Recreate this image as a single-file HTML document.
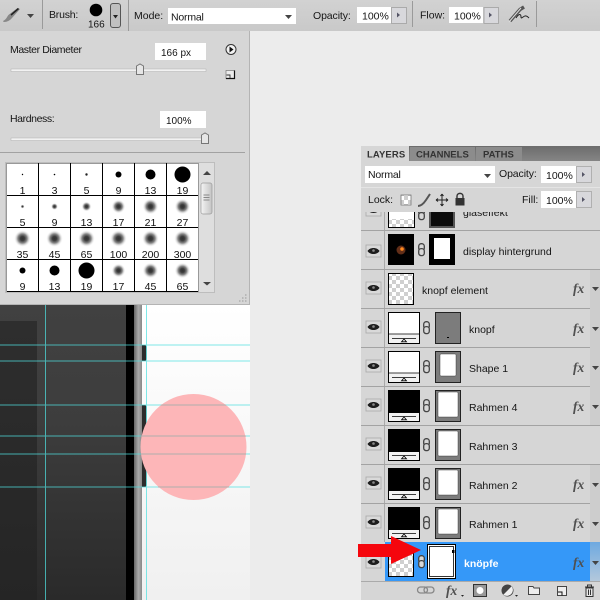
<!DOCTYPE html>
<html><head><meta charset="utf-8"><style>
html,body{margin:0;padding:0;background:#ececec;width:600px;height:600px;overflow:hidden}
svg{display:block}
text{font-family:"Liberation Sans",sans-serif;font-size:10.5px;fill:#151515}
.m{text-anchor:middle;font-size:10.5px;fill:#111}
.t{font-size:10.5px;font-weight:bold}
</style></head><body>
<svg width="600" height="600" viewBox="0 0 600 600" xmlns="http://www.w3.org/2000/svg">
<defs>
<linearGradient id="tb" x1="0" y1="0" x2="0" y2="1"><stop offset="0" stop-color="#d2d2d2"/><stop offset="1" stop-color="#c9c9c9"/></linearGradient>
<linearGradient id="dk" x1="0" y1="0" x2="0" y2="1"><stop offset="0" stop-color="#414141"/><stop offset=".4" stop-color="#3d3d3d"/><stop offset="1" stop-color="#2a2a2a"/></linearGradient>
<linearGradient id="dk2" x1="0" y1="0" x2="0" y2="1"><stop offset="0" stop-color="#2e2e2e"/><stop offset="1" stop-color="#252525"/></linearGradient>
<linearGradient id="br" x1="0" y1="0" x2="1" y2="0"><stop offset="0" stop-color="#666"/><stop offset=".55" stop-color="#aaa"/><stop offset="1" stop-color="#888"/></linearGradient>
<linearGradient id="wh" x1="0" y1="0" x2="0" y2="1"><stop offset="0" stop-color="#fff"/><stop offset="1" stop-color="#f0f0f0"/></linearGradient>
<linearGradient id="tabs" x1="0" y1="0" x2="0" y2="1"><stop offset="0" stop-color="#6c6c6c"/><stop offset="1" stop-color="#858585"/></linearGradient>
<linearGradient id="sel" x1="0" y1="0" x2="0" y2="1"><stop offset="0" stop-color="#6ea9e0"/><stop offset="1" stop-color="#b3c8dc"/></linearGradient>
<linearGradient id="sb" x1="0" y1="0" x2="1" y2="0"><stop offset="0" stop-color="#f4f4f4"/><stop offset="1" stop-color="#c4c4c4"/></linearGradient>
<radialGradient id="soft"><stop offset="0" stop-color="#303030"/><stop offset=".25" stop-color="#3c3c3c"/><stop offset=".55" stop-color="#8a8a8a"/><stop offset="1" stop-color="#fff" stop-opacity="0"/></radialGradient>
<pattern id="ck" width="8" height="8" patternUnits="userSpaceOnUse"><rect width="8" height="8" fill="#fff"/><rect width="4" height="4" fill="#cfcfcf"/><rect x="4" y="4" width="4" height="4" fill="#cfcfcf"/></pattern>
<clipPath id="cl"><rect x="361" y="212" width="239" height="18"/></clipPath>
<g id="eye"><rect x="0" y="0" width="15" height="12" fill="#d9d9d9" stroke="#a8a8a8" stroke-width=".8"/><path d="M1.500 6C4 2 11 2 13.500 6C11 10 4 10 1.500 6Z" fill="#1e1e1e"/><circle cx="7.500" cy="5.500" r="1.300" fill="#8a8a8a"/></g>
<g id="chain"><rect x="0.700" y="0.700" width="5.600" height="7" rx="2.500" fill="#d8d8d8" stroke="#444" stroke-width="1.300"/><rect x="0.700" y="5.600" width="5.600" height="7" rx="2.500" fill="#d8d8d8" stroke="#444" stroke-width="1.300"/></g>
<g id="awW"><rect x="0.500" y="0.500" width="31" height="31" fill="#fff" stroke="#000"/><rect x="1" y="22" width="30" height="9" fill="#f2f2f2"/><path d="M1 22H31" stroke="#000" stroke-width=".8"/><path d="M4 26.500H28" stroke="#000" stroke-width=".8"/><path d="M16 27L13.500 29.800H18.500Z" fill="none" stroke="#000" stroke-width=".8"/></g>
<g id="awK"><rect x="0.500" y="0.500" width="31" height="31" fill="#000" stroke="#000"/><rect x="1" y="23" width="30" height="8" fill="#f2f2f2"/><path d="M4 26.500H28" stroke="#000" stroke-width=".8"/><path d="M16 27L13.500 29.800H18.500Z" fill="none" stroke="#000" stroke-width=".8"/></g>
<g id="mk"><rect x="0.500" y="0.500" width="25" height="31" fill="#7c7c7c" stroke="#222"/><rect x="3" y="2" width="20" height="25" rx="1" fill="#fff" stroke="#222" stroke-width=".4"/></g>
<g id="mkS"><rect x="0.500" y="0.500" width="25" height="31" fill="#7c7c7c" stroke="#222"/><rect x="5" y="3" width="16" height="22" rx="1" fill="#fff" stroke="#222" stroke-width=".4"/></g>
<g id="fx"><text x="1" y="0" style="font-family:'Liberation Serif',serif;font-style:italic;font-weight:bold;font-size:13.500px;fill:#505050">fx</text></g>
<path id="tri" d="M0 0H7L3.500 4Z" fill="#444"/>
</defs>

<rect width="600" height="600" fill="#ececec"/>

<!-- toolbar -->
<rect width="600" height="31" fill="url(#tb)"/>
<path d="M42.500 0V29M128.500 0V31M412.500 1V27M536.500 1V27" stroke="#9a9a9a"/>
<path d="M3 21C3 23 9 22 12 18L20 9L17.500 8L9 14.500C7 16 7 19 3 21Z" fill="#888"/>
<path d="M11 15L18.500 8.500" stroke="#222" stroke-width="1.500"/>
<use href="#tri" x="27" y="14"/>
<text x="49" y="18" style="letter-spacing:-.2px">Brush:</text>
<circle cx="96" cy="10" r="6.300" fill="#000"/>
<text x="88" y="27.500" style="font-size:10px">166</text>
<rect x="110.500" y="3.500" width="10" height="24" rx="2.500" fill="#c0c0c0" stroke="#555"/>
<path d="M113 15H118L115.500 18.500Z" fill="#222"/>
<text x="134" y="19">Mode:</text>
<rect x="168" y="8" width="128" height="16" fill="#fff"/>
<text x="171" y="20.500" style="letter-spacing:-.2px">Normal</text>
<use href="#tri" x="285" y="15"/>
<text x="313" y="19" style="letter-spacing:-.1px">Opacity:</text>
<rect x="357" y="7" width="34" height="16" fill="#fff"/>
<text x="362" y="19.500">100%</text>
<rect x="391.500" y="7.500" width="15" height="16" fill="#d8d8dc" stroke="#aaa"/>
<path d="M397 12.500L400 15L397 17.500Z" fill="#556"/>
<text x="420" y="18.500">Flow:</text>
<rect x="449" y="7" width="34" height="16" fill="#fff"/>
<text x="454" y="19.500">100%</text>
<rect x="484" y="7.500" width="14.500" height="16" fill="#d8d8dc" stroke="#aaa"/>
<path d="M489 12.500L492 15L489 17.500Z" fill="#556"/>
<path d="M510 21L520 9.500L524 7" stroke="#555" stroke-width="3.500" fill="none"/>
<path d="M509 22L521 8" stroke="#ddd" stroke-width="1" fill="none"/>
<path d="M516 18C519 13 521 14 521 17C521 20 524 15 526 16C527 16 528 17 529 18" stroke="#222" stroke-width="1" fill="none"/>

<!-- canvas -->
<rect x="0" y="305" width="127" height="295" fill="url(#dk)"/>
<rect x="0" y="321" width="37" height="279" fill="url(#dk2)"/>
<rect x="126" y="305" width="8" height="295" fill="#000"/>
<rect x="134" y="305" width="8" height="295" fill="url(#br)"/>
<rect x="142" y="305" width="108" height="295" fill="url(#wh)"/>
<path d="M142 345H144C146 345 146.500 346 146.500 348V358C146.500 360 146 361 144 361H142Z" fill="#2b2b2b"/>
<path d="M142 405H144C146 405 146.500 406 146.500 408V484C146.500 486 146 487 144 487H142Z" fill="#2b2b2b"/>
<g stroke="#4fe0e0" stroke-width="1" opacity=".72">
<path d="M0 345H250M0 361H250M0 405H250M0 436H250M0 454H250M0 487H250M45.500 305V600M146.500 305V600"/>
</g>
<circle cx="193.500" cy="447" r="53" fill="#fdb6b8"/>
<path d="M161 405H226M141 436H246M141 454H246M158 487H229" stroke="#b0adad" stroke-width="1"/>

<!-- brush panel -->
<rect x="0" y="31" width="250" height="274" fill="#d6d6d6"/>
<path d="M249.500 31V305M0 304.500H250" stroke="#b4b4b4"/>
<text x="10" y="53" style="letter-spacing:-.4px">Master Diameter</text>
<rect x="155" y="43" width="51" height="17" fill="#fff"/>
<text x="161" y="56" style="font-size:10px">166 px</text>
<rect x="11" y="69" width="195" height="2.500" fill="#f2f2f2" stroke="#b0b0b0" stroke-width=".5"/>
<path d="M136.500 66L140 64L143.500 66V74.500H136.500Z" fill="#e6e6e6" stroke="#777"/>
<circle cx="231" cy="49.500" r="5" fill="#f2f2f2" stroke="#333"/>
<path d="M229.500 46.500L233.500 49.500L229.500 52.500Z" fill="#111"/>
<rect x="226" y="70.500" width="8.500" height="8" fill="#ececec" stroke="#777" stroke-width=".7"/>
<path d="M234.500 70.500V78.500H226" fill="none" stroke="#111" stroke-width="1.200"/>
<path d="M226.500 75H230V78" fill="none" stroke="#333" stroke-width=".9"/>
<text x="10" y="122" style="letter-spacing:-.4px">Hardness:</text>
<rect x="160" y="111" width="46" height="17" fill="#fff"/>
<text x="166" y="124" style="font-size:10px">100%</text>
<rect x="11" y="138" width="195" height="2.500" fill="#f2f2f2" stroke="#b0b0b0" stroke-width=".5"/>
<path d="M201.500 135L205 133L208.500 135V143.500H201.500Z" fill="#e6e6e6" stroke="#777"/>
<path d="M0 152.500H245" stroke="#a2a2a2"/>

<rect x="5.500" y="162.500" width="209" height="130" fill="#dedede" stroke="#bdbdbd"/>
<rect x="6" y="163" width="192" height="129" fill="#fff"/>
<path d="M6 163.500H198M6.500 163V292M198.500 163V292" stroke="#999"/>
<path d="M7 195.500H198M7 227.500H198M7 259.500H198M7 291.500H198M38.500 163V292M70.500 163V292M102.500 163V292M134.500 163V292M166.500 163V292" stroke="#000"/>
<rect x="201" y="183" width="11" height="31" rx="2" fill="url(#sb)" stroke="#9a9a9a" stroke-width=".7"/>
<path d="M203.500 195H209.500M203.500 197.500H209.500M203.500 200H209.500" stroke="#888"/>
<path d="M203 175L207 171L211 175Z" fill="#444"/>
<path d="M203 282L207 285.500L211 282Z" fill="#444"/>
<path d="M245 295h1.500M242 298h1.500M245 298h1.500M239 301h1.500M242 301h1.500M245 301h1.500" stroke="#999"/>

<!-- brush tips -->
<circle cx="22.500" cy="174.500" r=".7" fill="#000"/><circle cx="54.500" cy="174.500" r=".8" fill="#000"/><circle cx="86.500" cy="174.500" r="1.200" fill="#222"/>
<circle cx="118.500" cy="174.500" r="3" fill="#000"/><circle cx="150.500" cy="174.500" r="5" fill="#000"/><circle cx="182.500" cy="174.500" r="8" fill="#000"/>
<circle cx="22.500" cy="206.500" r="2" fill="url(#soft)"/><circle cx="54.500" cy="206.500" r="3.500" fill="url(#soft)"/><circle cx="86.500" cy="206.500" r="5" fill="url(#soft)"/><circle cx="118.500" cy="206.500" r="7" fill="url(#soft)"/><circle cx="150.500" cy="206.500" r="8" fill="url(#soft)"/><circle cx="182.500" cy="206.500" r="8" fill="url(#soft)"/>
<circle cx="22.500" cy="238.500" r="8.500" fill="url(#soft)"/><circle cx="54.500" cy="238.500" r="8.500" fill="url(#soft)"/><circle cx="86.500" cy="238.500" r="8.500" fill="url(#soft)"/><circle cx="118.500" cy="238.500" r="8.500" fill="url(#soft)"/><circle cx="150.500" cy="238.500" r="8.500" fill="url(#soft)"/><circle cx="182.500" cy="238.500" r="8.500" fill="url(#soft)"/>
<circle cx="22.500" cy="270.500" r="3" fill="#000"/><circle cx="54.500" cy="270.500" r="5" fill="#000"/><circle cx="86.500" cy="270.500" r="8" fill="#000"/><circle cx="118.500" cy="270.500" r="7" fill="url(#soft)"/><circle cx="150.500" cy="270.500" r="8" fill="url(#soft)"/><circle cx="182.500" cy="270.500" r="8" fill="url(#soft)"/>
<text class="m" x="22.500" y="194">1</text><text class="m" x="54.500" y="194">3</text><text class="m" x="86.500" y="194">5</text><text class="m" x="118.500" y="194">9</text><text class="m" x="150.500" y="194">13</text><text class="m" x="182.500" y="194">19</text>
<text class="m" x="22.500" y="226">5</text><text class="m" x="54.500" y="226">9</text><text class="m" x="86.500" y="226">13</text><text class="m" x="118.500" y="226">17</text><text class="m" x="150.500" y="226">21</text><text class="m" x="182.500" y="226">27</text>
<text class="m" x="22.500" y="258">35</text><text class="m" x="54.500" y="258">45</text><text class="m" x="86.500" y="258">65</text><text class="m" x="118.500" y="258">100</text><text class="m" x="150.500" y="258">200</text><text class="m" x="182.500" y="258">300</text>
<text class="m" x="22.500" y="290">9</text><text class="m" x="54.500" y="290">13</text><text class="m" x="86.500" y="290">19</text><text class="m" x="118.500" y="290">17</text><text class="m" x="150.500" y="290">45</text><text class="m" x="182.500" y="290">65</text>

<!-- layers panel -->
<rect x="361" y="146" width="239" height="454" fill="#d6d6d6"/>
<rect x="361" y="146" width="239" height="15" fill="url(#tabs)"/>
<rect x="361" y="146" width="48" height="16" fill="#d6d6d6"/>
<rect x="410" y="147" width="65" height="14" fill="#8c8c8c"/>
<rect x="476" y="147" width="46" height="14" fill="#8c8c8c"/>
<text class="t" x="367" y="157.500" style="font-size:9.500px;letter-spacing:.1px;fill:#333">LAYERS</text>
<text class="t" x="416" y="157.500" style="font-size:9.500px;fill:#333">CHANNELS</text>
<text class="t" x="483" y="157.500" style="font-size:9.500px;fill:#333">PATHS</text>

<rect x="365" y="166" width="130" height="17" fill="#fff"/>
<text x="368" y="178" style="letter-spacing:-.2px">Normal</text>
<use href="#tri" x="484" y="174"/>
<text x="499" y="177" style="letter-spacing:-.1px">Opacity:</text>
<rect x="541" y="166" width="35" height="17" fill="#fff"/>
<text x="546" y="179">100%</text>
<rect x="576.500" y="166.500" width="15" height="16" fill="#d8d8dc" stroke="#b0b0b0"/>
<path d="M582 172L585 174.500L582 177Z" fill="#556"/>

<path d="M361 187.500H600" stroke="#e4e4e4"/>
<text x="368" y="203">Lock:</text>
<rect x="401" y="195" width="10" height="10" fill="url(#ck)" stroke="#777" stroke-width=".8"/>
<path d="M418 206C421 206 424 203 426 200L430 194" stroke="#555" stroke-width="2" fill="none"/>
<path d="M436 200H448M442 194V206M436 200L438 198.500M436 200L438 201.500M448 200L446 198.500M448 200L446 201.500M442 194L440.500 196M442 194L443.500 196M442 206L440.500 204M442 206L443.500 204" stroke="#222" stroke-width="1" fill="none"/>
<path d="M457 198V196C457 192.500 463 192.500 463 196V198" stroke="#333" fill="none" stroke-width="1.400"/>
<rect x="455.500" y="198" width="9" height="7.500" fill="#333"/>
<text x="522" y="203">Fill:</text>
<rect x="541" y="191" width="35" height="17" fill="#fff"/>
<text x="546" y="204">100%</text>
<rect x="576.500" y="191.500" width="15" height="16" fill="#d8d8dc" stroke="#b0b0b0"/>
<path d="M582 197L585 199.500L582 202Z" fill="#556"/>

<!-- layer list -->
<rect x="361" y="212" width="239" height="369" fill="#d6d6d6"/>
<path d="M384.500 212V542" stroke="#aaa"/>
<path d="M361 230.500H600M361 269.500H600M361 308.500H600M361 347.500H600M361 386.500H600M361 425.500H600M361 464.500H600M361 503.500H600" stroke="#a3a3a3"/>
<rect x="590" y="270" width="10" height="155" fill="#cdcdcd"/>
<rect x="590" y="465" width="10" height="77" fill="#cdcdcd"/>

<!-- clipped row -->
<g clip-path="url(#cl)">
<rect x="388" y="205" width="26" height="22" fill="url(#ck)"/>
<rect x="388" y="205" width="26" height="14" fill="#fff"/>
<path d="M388.500 205V227.500H414.500V205" fill="none" stroke="#000"/>
<rect x="429" y="205" width="26" height="23" fill="#555"/>
<rect x="431" y="205" width="22" height="21" fill="#0c0c0c"/>
<use href="#chain" x="418" y="207"/>
<text x="463" y="216">glaseffekt</text>
<use href="#eye" x="366" y="204"/>
</g>

<!-- display hintergrund -->
<use href="#eye" x="366" y="245"/>
<rect x="388" y="234" width="26" height="31" fill="#000"/>
<circle cx="401" cy="250" r="4.500" fill="#7a3a1e" opacity=".8"/><circle cx="402" cy="249" r="1.800" fill="#ff8a1e"/>
<use href="#chain" x="418" y="243"/>
<rect x="429" y="234" width="26" height="31" fill="#000"/>
<rect x="434" y="238" width="16" height="21" fill="#fff"/>
<text x="463" y="255">display hintergrund</text>

<!-- knopf element -->
<use href="#eye" x="366" y="282"/>
<rect x="388.500" y="273.500" width="25" height="31" fill="url(#ck)" stroke="#000"/>
<text x="422" y="294">knopf element</text>
<use href="#fx" x="572" y="293"/><use href="#tri" x="592" y="287"/>

<!-- knopf -->
<use href="#eye" x="366" y="321"/>
<use href="#awW" x="388" y="312"/>
<use href="#chain" x="423" y="321"/>
<rect x="435.500" y="312.500" width="25" height="31" fill="#7c7c7c" stroke="#222"/>
<rect x="447" y="337" width="2" height="1" fill="#000"/>
<text x="469" y="333">knopf</text>
<use href="#fx" x="572" y="333"/><use href="#tri" x="592" y="327"/>

<!-- Shape 1 -->
<use href="#eye" x="366" y="360"/>
<use href="#awW" x="388" y="351"/>
<use href="#chain" x="423" y="360"/>
<use href="#mkS" x="435" y="351"/>
<text x="469" y="372">Shape 1</text>
<use href="#fx" x="572" y="372"/><use href="#tri" x="592" y="366"/>

<!-- Rahmen 4 -->
<use href="#eye" x="366" y="399"/>
<use href="#awK" x="388" y="390"/>
<use href="#chain" x="423" y="399"/>
<use href="#mk" x="435" y="390"/>
<text x="469" y="411">Rahmen 4</text>
<use href="#fx" x="572" y="411"/><use href="#tri" x="592" y="405"/>

<!-- Rahmen 3 -->
<use href="#eye" x="366" y="438"/>
<use href="#awK" x="388" y="429"/>
<use href="#chain" x="423" y="438"/>
<use href="#mk" x="435" y="429"/>
<text x="469" y="450">Rahmen 3</text>

<!-- Rahmen 2 -->
<use href="#eye" x="366" y="477"/>
<use href="#awK" x="388" y="468"/>
<use href="#chain" x="423" y="477"/>
<use href="#mk" x="435" y="468"/>
<text x="469" y="489">Rahmen 2</text>
<use href="#fx" x="572" y="489"/><use href="#tri" x="592" y="483"/>

<!-- Rahmen 1 -->
<use href="#eye" x="366" y="516"/>
<use href="#awK" x="388" y="507"/>
<use href="#chain" x="423" y="516"/>
<use href="#mk" x="435" y="507"/>
<text x="469" y="528">Rahmen 1</text>
<use href="#fx" x="572" y="528"/><use href="#tri" x="592" y="522"/>

<!-- selected -->
<use href="#eye" x="366" y="556"/>
<rect x="385" y="542" width="215" height="39" fill="#3598f8"/>
<rect x="590" y="542" width="10" height="39" fill="url(#sel)"/>
<rect x="388.500" y="547.500" width="25" height="29" fill="url(#ck)" stroke="#000"/>
<use href="#chain" x="418" y="555"/>
<rect x="427.500" y="544.500" width="28" height="34" fill="#fff" stroke="#000"/>
<rect x="429.500" y="546.500" width="24" height="30" fill="#fff" stroke="#000" stroke-width=".8"/>
<rect x="452" y="550" width="2.500" height="3" fill="#000"/>
<text x="464" y="567" style="font-weight:bold;fill:#fff">knöpfe</text>
<use href="#fx" x="572" y="567"/><use href="#tri" x="592" y="561"/>
<path d="M358 544H391V536L421 550L391 564V557H358Z" fill="#f5060d"/>

<!-- footer -->
<rect x="361" y="581" width="239" height="19" fill="#d6d6d6"/>
<path d="M361 581.500H600" stroke="#aaa"/>
<rect x="417.500" y="587" width="10" height="6" rx="3" fill="none" stroke="#888" stroke-width="1.300"/>
<rect x="424" y="587" width="10" height="6" rx="3" fill="none" stroke="#888" stroke-width="1.300"/>
<use href="#fx" x="445" y="595"/>
<path d="M461 595h3l-1.500 1.800z" fill="#222"/>
<rect x="473.500" y="584.500" width="13" height="12" fill="#999" stroke="#333"/>
<circle cx="480" cy="590.500" r="3.500" fill="#fff"/>
<circle cx="507.500" cy="590.500" r="6" fill="#444"/>
<path d="M503.300 594.700A6 6 0 0 1 511.700 586.300Z" fill="#f0f0f0" transform="rotate(180 507.500 590.500)"/>
<path d="M515 595h3l-1.500 1.800z" fill="#222"/>
<path d="M528.500 586.500H533L534 588H539.500V594.500H528.500Z" fill="#ededed" stroke="#444"/>
<rect x="557.500" y="586.500" width="9" height="9" fill="#eee" stroke="#444"/>
<path d="M558 592H562V595.500" fill="none" stroke="#111"/>
<path d="M585 587H594M587.500 587V585H591.500V587" stroke="#333" fill="none"/>
<rect x="586" y="588" width="7" height="8.500" fill="#e8e8e8" stroke="#333"/>
<path d="M588.500 589.500V595M590.500 589.500V595" stroke="#333"/>
</svg>
</body></html>
